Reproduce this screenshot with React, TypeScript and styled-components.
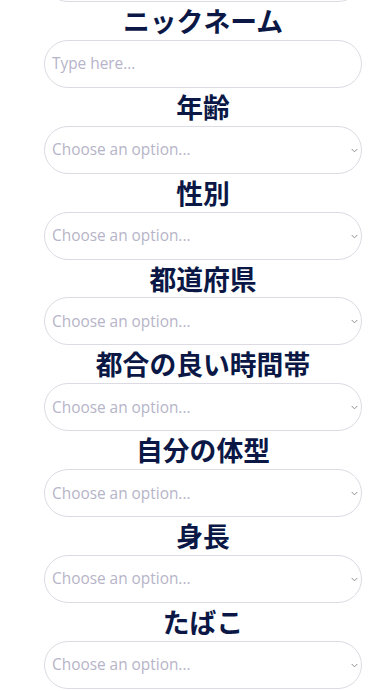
import React from 'react';
import styled, { createGlobalStyle } from 'styled-components';

const GlobalStyle = createGlobalStyle`
  html, body {
    margin: 0;
    padding: 0;
    background: #ffffff;
    overflow: hidden;
  }
  body {
    font-family: 'Open Sans', 'Noto Sans CJK JP', sans-serif;
  }
`;

const fields: { label: string; kind: 'text' | 'select' }[] = [
  { label: 'ニックネーム', kind: 'text' },
  { label: '年齢', kind: 'select' },
  { label: '性別', kind: 'select' },
  { label: '都道府県', kind: 'select' },
  { label: '都合の良い時間帯', kind: 'select' },
  { label: '自分の体型', kind: 'select' },
  { label: '身長', kind: 'select' },
  { label: 'たばこ', kind: 'select' },
];

const App: React.FC = () => {
  return (
    <>
      <GlobalStyle />
      <Form>
        {/* the field above, scrolled mostly out of view */}
        <PrevField placeholder="" readOnly />
        {fields.map((f) => (
          <Field key={f.label}>
            <Label>{f.label}</Label>
            {f.kind === 'text' ? (
              <TextInput placeholder="Type here..." />
            ) : (
              <SelectWrap>
                <Select defaultValue="">
                  <option value="" disabled>
                    Choose an option...
                  </option>
                </Select>
                <Chevron viewBox="0 0 8 5" aria-hidden>
                  <path d="M0.8 0.8 L4 4 L7.2 0.8" />
                </Chevron>
              </SelectWrap>
            )}
          </Field>
        ))}
      </Form>
    </>
  );
};

export default App;

const Form = styled.div`
  display: flex;
  flex-direction: column;
  width: 318px;
  padding-left: 44px;
`;

const Field = styled.div`
  display: flex;
  flex-direction: column;
`;

const Label = styled.div`
  height: 37.85px;
  line-height: 37.85px;
  text-align: center;
  font-family: 'Noto Sans CJK JP', 'Noto Sans', sans-serif;
  font-weight: 700;
  font-size: 26.8px;
  color: #0b1846;
`;

const boxStyle = `
  box-sizing: border-box;
  width: 100%;
  height: 48px;
  border: 1px solid #dcdae3;
  border-radius: 24px;
  background: #ffffff;
  padding: 0 24px 0 7px;
  font-family: 'Open Sans', sans-serif;
  font-size: 15.4px;
  outline: none;
`;

const PrevField = styled.input`
  ${boxStyle}
  margin-top: -46px;
`;

const TextInput = styled.input`
  ${boxStyle}
  color: #333;
  &::placeholder {
    color: #b6b4c8;
  }
`;

const SelectWrap = styled.div`
  position: relative;
`;

const Select = styled.select`
  ${boxStyle}
  appearance: none;
  -webkit-appearance: none;
  color: #b6b4c8;
`;

const Chevron = styled.svg`
  position: absolute;
  right: 4px;
  top: 22px;
  width: 7px;
  height: 5px;
  fill: none;
  stroke: #8a8a8a;
  stroke-width: 1.1;
  pointer-events: none;
`;
